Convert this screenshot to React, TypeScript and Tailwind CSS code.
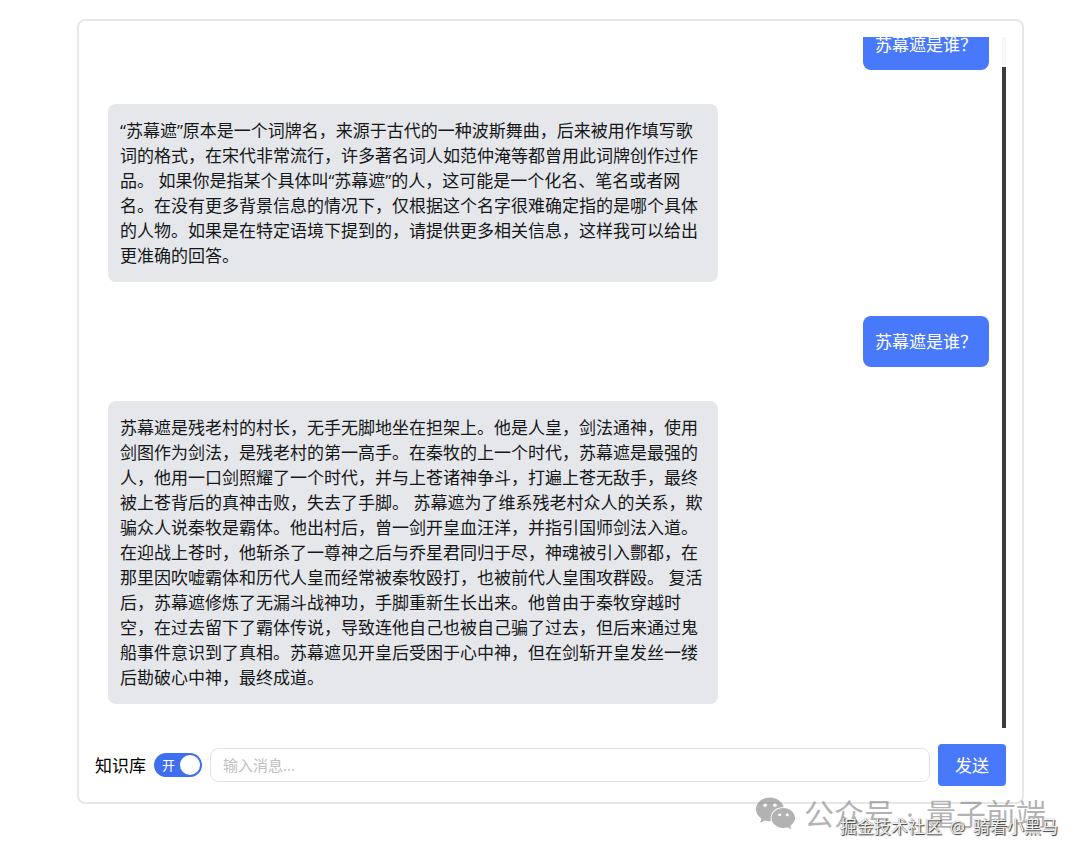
import { useState } from "react"
import { FaWeixin } from "react-icons/fa"

type Message = {
  id: number
  role: "user" | "assistant"
  content: string
}

const messages: Message[] = [
  { id: 1, role: "user", content: "苏幕遮是谁？" },
  {
    id: 2,
    role: "assistant",
    content:
      "“苏幕遮”原本是一个词牌名，来源于古代的一种波斯舞曲，后来被用作填写歌词的格式，在宋代非常流行，许多著名词人如范仲淹等都曾用此词牌创作过作品。 如果你是指某个具体叫“苏幕遮”的人，这可能是一个化名、笔名或者网名。在没有更多背景信息的情况下，仅根据这个名字很难确定指的是哪个具体的人物。如果是在特定语境下提到的，请提供更多相关信息，这样我可以给出更准确的回答。",
  },
  { id: 3, role: "user", content: "苏幕遮是谁？" },
  {
    id: 4,
    role: "assistant",
    content:
      "苏幕遮是残老村的村长，无手无脚地坐在担架上。他是人皇，剑法通神，使用剑图作为剑法，是残老村的第一高手。在秦牧的上一个时代，苏幕遮是最强的人，他用一口剑照耀了一个时代，并与上苍诸神争斗，打遍上苍无敌手，最终被上苍背后的真神击败，失去了手脚。 苏幕遮为了维系残老村众人的关系，欺骗众人说秦牧是霸体。他出村后，曾一剑开皇血汪洋，并指引国师剑法入道。在迎战上苍时，他斩杀了一尊神之后与乔星君同归于尽，神魂被引入酆都，在那里因吹嘘霸体和历代人皇而经常被秦牧殴打，也被前代人皇围攻群殴。 复活后，苏幕遮修炼了无漏斗战神功，手脚重新生长出来。他曾由于秦牧穿越时空，在过去留下了霸体传说，导致连他自己也被自己骗了过去，但后来通过鬼船事件意识到了真相。苏幕遮见开皇后受困于心中神，但在剑斩开皇发丝一缕后勘破心中神，最终成道。",
  },
]

function Bubble({ message }: { message: Message }) {
  if (message.role === "user") {
    return (
      <div className="shrink-0 self-end rounded-lg bg-[#4879fb] px-3 py-[13px] text-white">
        {message.content}
      </div>
    )
  }
  return (
    <div className="max-w-[610px] shrink-0 self-start rounded-lg bg-[#e5e7eb] px-3 py-[14px] text-[#161719]">
      {message.content}
    </div>
  )
}

export default function App() {
  const [useKnowledge, setUseKnowledge] = useState(true)
  const [text, setText] = useState("")

  return (
    <div
      lang="zh-CN"
      className="relative flex h-screen flex-col bg-white pt-[19px] pr-[56px] pb-[54px] pl-[77px] font-['Open_Sans','Noto_Sans_CJK_SC',sans-serif] text-[17px] leading-[25px]"
    >
      <div className="flex min-h-0 flex-1 flex-col gap-4 rounded-lg border-2 border-[#e7e7e7] p-4">
        <div className="flex min-h-0 flex-1">
          {/* column-reverse keeps the list scrolled to the newest message */}
          <div className="flex min-w-0 flex-1 flex-col-reverse overflow-y-auto [scrollbar-width:none]">
            <div className="flex flex-col gap-[34px] px-[13px] pb-6">
              {messages.map((m) => (
                <Bubble key={m.id} message={m} />
              ))}
            </div>
          </div>
          <div className="flex w-1 flex-col bg-[#f7f7f7] pt-[30px]">
            <div className="flex-1 bg-[#3c3c3c]" />
          </div>
        </div>

        <form className="flex items-center gap-2" onSubmit={(e) => e.preventDefault()}>
          <label htmlFor="knowledge" className="shrink-0 text-black">
            知识库
          </label>
          <button
            id="knowledge"
            type="button"
            role="switch"
            aria-checked={useKnowledge}
            onClick={() => setUseKnowledge(!useKnowledge)}
            className={
              useKnowledge
                ? "flex h-6 w-12 shrink-0 items-center justify-between rounded-full bg-[#3f6fee] pr-0.5 pl-2 text-[13px] text-white"
                : "flex h-6 w-12 shrink-0 flex-row-reverse items-center justify-between rounded-full bg-gray-400 pr-2 pl-0.5 text-[13px] text-white"
            }
          >
            <span>{useKnowledge ? "开" : "关"}</span>
            <span className="h-5 w-5 rounded-full bg-white" />
          </button>
          <input
            type="text"
            aria-label="输入消息"
            placeholder="输入消息..."
            value={text}
            onChange={(e) => setText(e.target.value)}
            className="h-[34px] min-w-0 flex-1 rounded-lg border border-[#e3e3e3] px-3 text-[15px] outline-none placeholder:text-[#bfbfbf]"
          />
          <button
            type="submit"
            className="h-[42px] shrink-0 rounded-[4px] bg-[#4879fb] px-[17px] text-white"
          >
            发送
          </button>
        </form>
      </div>

      <div className="pointer-events-none absolute right-[34px] bottom-6 flex items-center gap-2 text-[#7f7f7f]/60">
        <FaWeixin className="h-[41px] w-[41px]" />
        <span className="flex gap-3 text-[30px] leading-[36px] whitespace-nowrap">
          <span>公众号</span>
          <span>·</span>
          <span>量子前端</span>
        </span>
      </div>
      <div className="pointer-events-none absolute right-[22px] bottom-[19px] flex gap-2 whitespace-nowrap text-white/90 [text-shadow:1px_1px_1px_#333,0_0_1px_#666]">
        <span>掘金技术社区</span>
        <span>@</span>
        <span>骑着小黑马</span>
      </div>
    </div>
  )
}
